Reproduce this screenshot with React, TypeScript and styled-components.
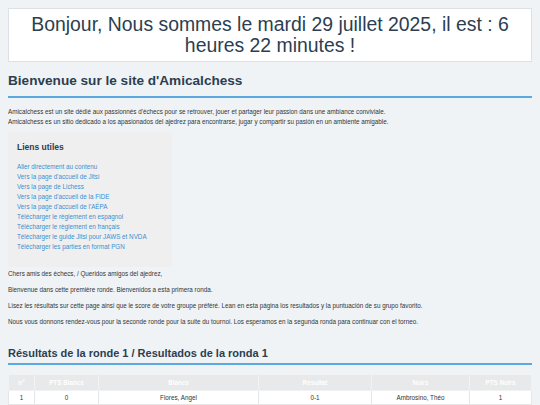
import { createGlobalStyle, styled } from "styled-components";

const GlobalStyle = createGlobalStyle`
  body {
    margin: 8px;
    background: #eff3f6;
    font-family: "Liberation Sans", Arial, sans-serif;
    color: #333;
  }
`;

const Greeting = styled.div`
  background: #fff;
  border: 1px solid #dde1e5;
  padding: 5px 8px;
  font-size: 19.4px;
  line-height: 21px;
  color: #2c3e50;
  text-align: center;
`;

const Title = styled.h1`
  margin: 10px 0 9px;
  padding-bottom: 6px;
  border-bottom: 2px solid #5aa9e0;
  font-size: 13.6px;
  line-height: 18px;
  font-weight: bold;
  color: #2c3e50;
`;

const SubTitle = styled.h2`
  margin: 19px 0 9px;
  padding-bottom: 3px;
  border-bottom: 2px solid #5aa9e0;
  font-size: 11px;
  line-height: 14px;
  font-weight: bold;
  color: #2c3e50;
`;

const Text = styled.p<{ $gap?: number }>`
  margin: 0 0 ${(p) => p.$gap ?? 6}px;
  font-size: 6.3px;
  line-height: 10px;
  color: #333;
`;

const LinksBox = styled.nav`
  width: 146px;
  margin: 5px 0 2px;
  padding: 10px 9px 15px;
  background: #efefef;
`;

const LinksTitle = styled.h3`
  margin: 0 0 10px;
  font-size: 8.5px;
  line-height: 10px;
  color: #2c3e50;
`;

const LinkList = styled.ul`
  list-style: none;
  margin: 0;
  padding: 0;
`;

const LinkItem = styled.li`
  font-size: 6.3px;
  line-height: 10px;
  a {
    color: #3a8fd1;
    text-decoration: none;
  }
`;

const Table = styled.table`
  width: 523px;
  border-collapse: collapse;
  table-layout: fixed;
  background: #fff;
  border: 1px solid #e2e4e6;
`;

const HeadCell = styled.th`
  height: 15px;
  padding: 0;
  background: #e8e9ea;
  color: #fff;
  font-size: 6.3px;
  font-weight: bold;
  border: 1px solid #f2f2f2;
`;

const Cell = styled.td`
  height: 13px;
  padding: 0;
  text-align: center;
  font-size: 6.3px;
  color: #333;
  border: 1px solid #e6e6e6;
`;

const links = [
  "Aller directement au contenu",
  "Vers la page d'accueil de Jitsi",
  "Vers la page de Lichess",
  "Vers la page d'accueil de la FIDE",
  "Vers la page d'accueil de l'AÉPA",
  "Télécharger le règlement en espagnol",
  "Télécharger le règlement en français",
  "Télécharger le guide Jitsi pour JAWS et NVDA",
  "Télécharger les parties en format PGN",
];

const columns = [
  { label: "n°", width: 26 },
  { label: "PTS Blancs", width: 64 },
  { label: "Blancs", width: 160 },
  { label: "Résultat", width: 113 },
  { label: "Noirs", width: 98 },
  { label: "PTS Noirs", width: 62 },
];

const results = [
  ["1", "0", "Flores, Angel", "0-1", "Ambrosino, Théo", "1"],
  ["2", "0", "Lefebvre, Jean", "1-0", "Martínez, Lucía", "0"],
];

const App = () => {
  return (
    <>
      <GlobalStyle />
      <Greeting>
        Bonjour, Nous sommes le mardi 29 juillet 2025, il est : 6 heures 22 minutes !
      </Greeting>
      <Title>Bienvenue sur le site d'Amicalchess</Title>
      <Text $gap={0}>
        Amicalchess est un site dédié aux passionnés d'échecs pour se retrouver, jouer et partager leur passion dans une ambiance conviviale.
        <br />
        Amicalchess es un sitio dedicado a los apasionados del ajedrez para encontrarse, jugar y compartir su pasión en un ambiente amigable.
      </Text>
      <LinksBox>
        <LinksTitle>Liens utiles</LinksTitle>
        <LinkList>
          {links.map((l) => (
            <LinkItem key={l}>
              <a href="#">{l}</a>
            </LinkItem>
          ))}
        </LinkList>
      </LinksBox>
      <Text>Chers amis des échecs, / Queridos amigos del ajedrez,</Text>
      <Text>Bienvenue dans cette première ronde. Bienvenidos a esta primera ronda.</Text>
      <Text>
        Lisez les résultats sur cette page ainsi que le score de votre groupe préféré. Lean en esta página los resultados y la puntuación de su grupo favorito.
      </Text>
      <Text>
        Nous vous donnons rendez-vous pour la seconde ronde pour la suite du tournoi. Los esperamos en la segunda ronda para continuar con el torneo.
      </Text>
      <SubTitle>Résultats de la ronde 1 / Resultados de la ronda 1</SubTitle>
      <Table>
        <colgroup>
          {columns.map((c) => (
            <col key={c.label} style={{ width: c.width }} />
          ))}
        </colgroup>
        <thead>
          <tr>
            {columns.map((c) => (
              <HeadCell key={c.label}>{c.label}</HeadCell>
            ))}
          </tr>
        </thead>
        <tbody>
          {results.map((r) => (
            <tr key={r[0]}>
              {r.map((v, i) => (
                <Cell key={i}>{v}</Cell>
              ))}
            </tr>
          ))}
        </tbody>
      </Table>
    </>
  );
};

export default App;
